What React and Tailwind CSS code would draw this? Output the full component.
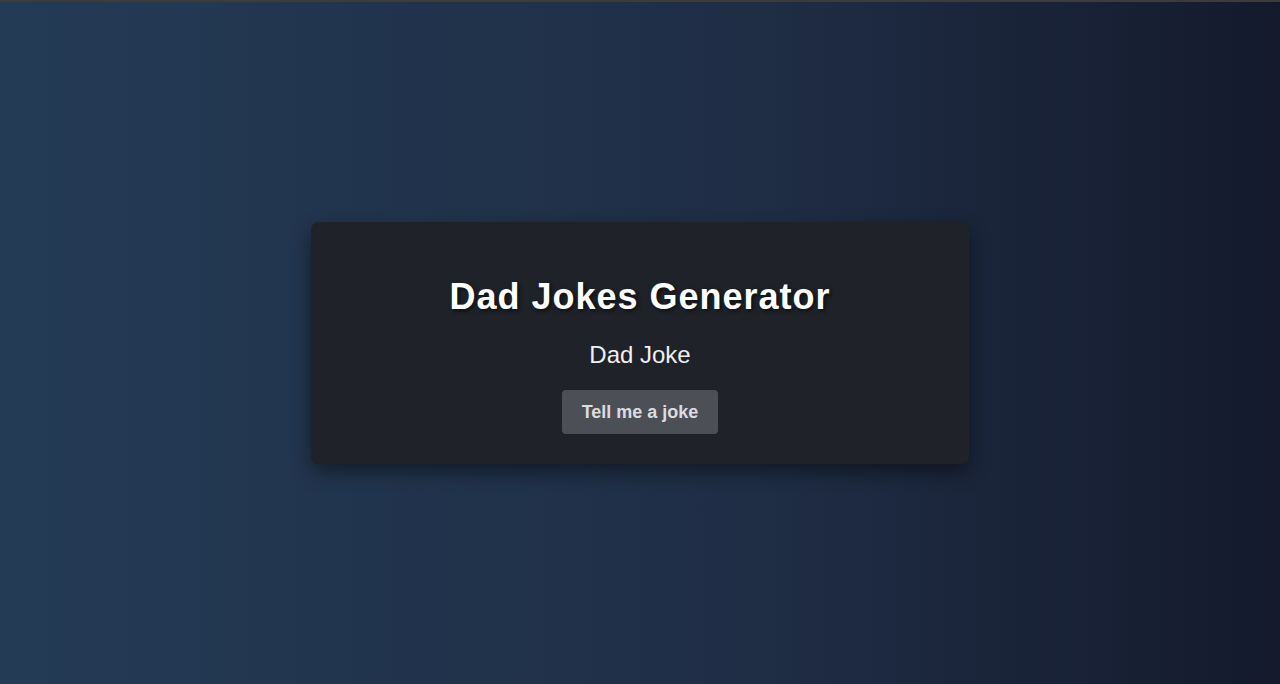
export default function App() {
  return (
    <div
      className="w-full h-[684px] border-t-2 border-[#3c3c3c] flex items-center justify-center bg-[linear-gradient(to_right,#243b55,#1f2d45_60%,#141a2c)]"
      style={{ fontFamily: '"Liberation Sans", Arial, sans-serif' }}
    >
      <div className="w-[658px] h-[242px] rounded-lg bg-[#1f2229] shadow-[0_8px_20px_rgba(0,0,0,0.45)] flex flex-col items-center pt-[54px]">
        <h1 className="text-[36px] leading-[41px] tracking-[1px] font-bold text-white [text-shadow:2px_2px_4px_rgba(0,0,0,0.6)]">
          Dad Jokes Generator
        </h1>
        <p className="mt-[24px] text-[24px] leading-[28px] text-[#f0f0f0]">Dad Joke</p>
        <button className="mt-[21px] w-[156px] h-[44px] rounded bg-[#4c4f55] text-[18px] font-bold text-[#dcdce0]">
          Tell me a joke
        </button>
      </div>
    </div>
  );
}
